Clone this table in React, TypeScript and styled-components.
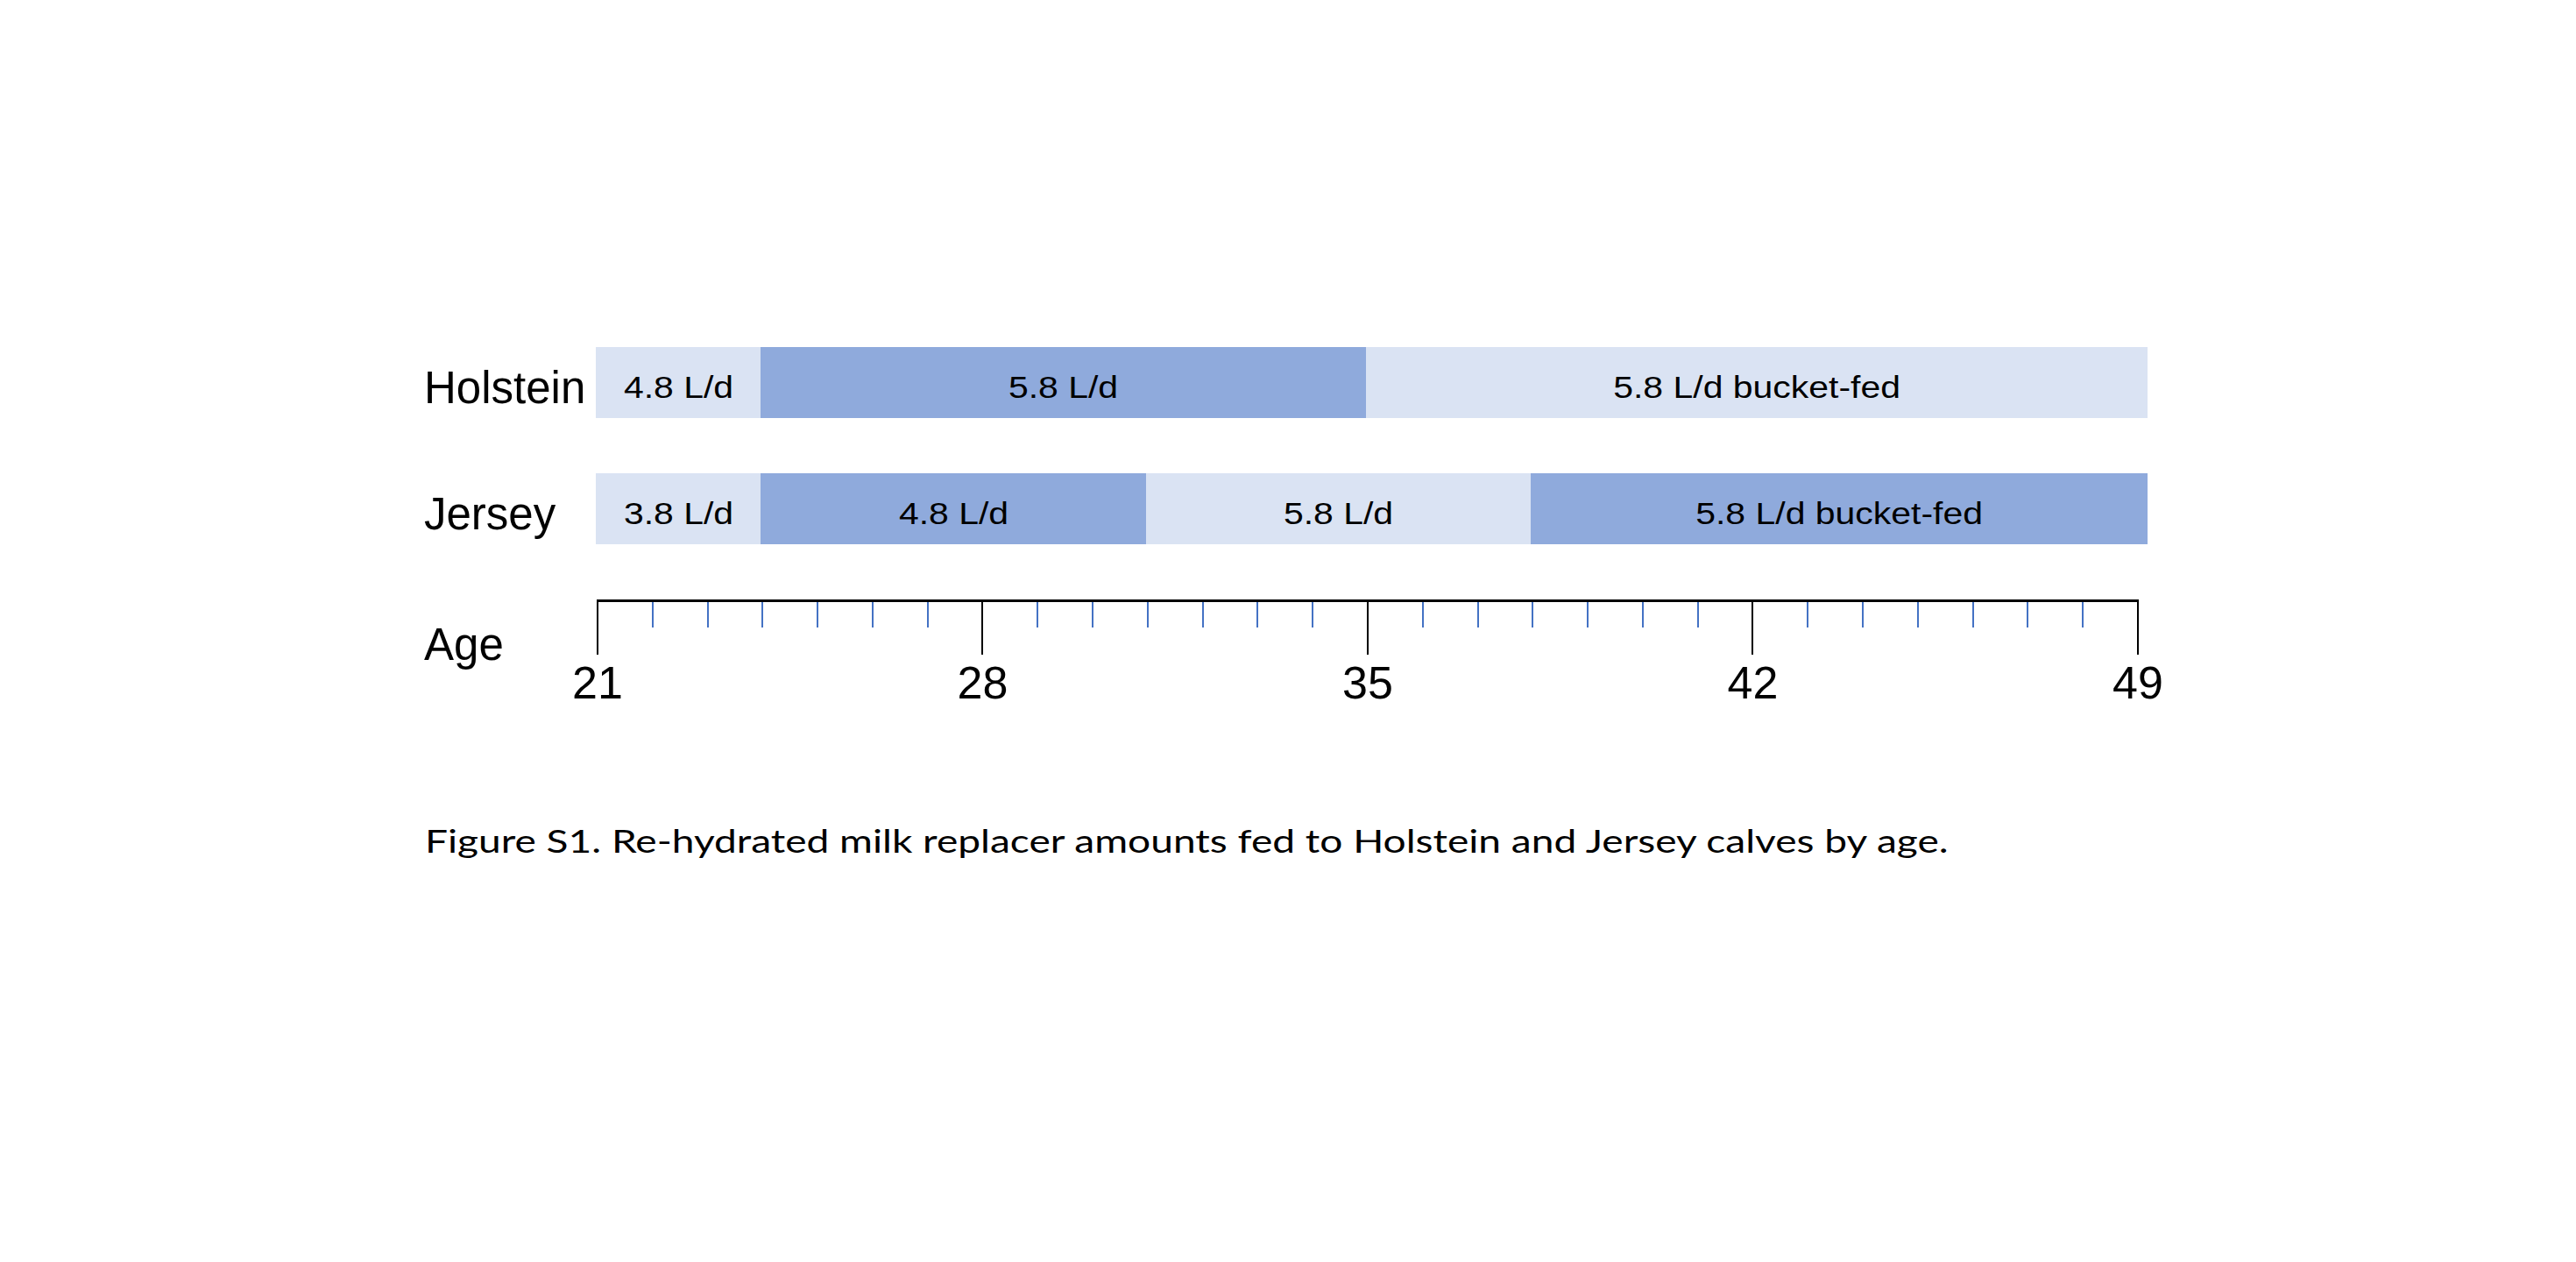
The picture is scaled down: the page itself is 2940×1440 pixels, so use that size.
import styled, { createGlobalStyle } from "styled-components";

const GlobalStyle = createGlobalStyle`
  html, body {
    margin: 0;
    padding: 0;
    background: #ffffff;
  }

  body {
    font-family: "Liberation Sans", Arial, sans-serif;
    color: #000000;
  }
`

// one day on the age axis (21 -> 49 spans 1758px)
const AXIS_WIDTH = 1760
const DAY = 1758 / 28

type Tone = "light" | "dark"

interface iSegment {
  label: string
  days?: number
  tone: Tone
}

interface iBreed {
  name: string
  segments: iSegment[]
}

const breeds: iBreed[] = [
  {
    name: "Holstein",
    segments: [
      { label: "4.8 L/d", days: 3, tone: "light" },
      { label: "5.8 L/d", days: 11, tone: "dark" },
      { label: "5.8 L/d bucket-fed", tone: "light" },
    ],
  },
  {
    name: "Jersey",
    segments: [
      { label: "3.8 L/d", days: 3, tone: "light" },
      { label: "4.8 L/d", days: 7, tone: "dark" },
      { label: "5.8 L/d", days: 7, tone: "light" },
      { label: "5.8 L/d bucket-fed", tone: "dark" },
    ],
  },
]

const days = Array.from({ length: 29 }, (_, i) => 21 + i)
const majorDays = days.filter((d) => (d - 21) % 7 === 0)

const Page = styled.main`
  box-sizing: border-box;
  width: 2940px;
  height: 1440px;
  padding: 396px 0 0 483px;
`

const Chart = styled.div`
  display: grid;
  grid-template-columns: 197px 1771px;
  row-gap: 63px;
`

const RowLabel = styled.div<{ $offset: number }>`
  font-size: 51px;
  line-height: 68px;
  padding-top: ${(p) => p.$offset}px;
  padding-left: 1px;
  white-space: nowrap;
`

const Track = styled.div`
  display: flex;
  height: 81px;
`

const Segment = styled.div<{ $tone: Tone }>`
  flex: 1 1 0;
  box-sizing: border-box;
  display: flex;
  justify-content: center;
  padding-top: 10px;
  font-size: 35px;
  line-height: 71px;
  white-space: nowrap;
  background-color: ${(p) => (p.$tone === "dark" ? "#8FAADC" : "#DAE3F3")};
`

const SegmentText = styled.span`
  display: inline-block;
  transform: scaleX(1.17);
`

const Axis = styled.div`
  margin-left: 1px;
  width: ${AXIS_WIDTH}px;
`

const TickRow = styled.div`
  display: flex;
  justify-content: space-between;
  align-items: flex-start;
  border-top: 3px solid #000000;
`

const Tick = styled.span<{ $major: boolean }>`
  width: 2px;
  height: ${(p) => (p.$major ? 60 : 29)}px;
  background-color: ${(p) => (p.$major ? "#000000" : "#4472C4")};
`

const TickLabels = styled.div`
  display: flex;
  justify-content: space-between;
  margin-top: 2px;
`

const TickLabel = styled.span`
  width: 2px;
  display: flex;
  justify-content: center;
  font-size: 52px;
  line-height: 60px;
  white-space: nowrap;
`

// caption in the source is a wide, stretched Calibri-like face
const Caption = styled.p`
  width: fit-content;
  margin: 128px 0 0 2px;
  font-family: Lato, "Open Sans", sans-serif;
  font-size: 37px;
  line-height: 44px;
  white-space: nowrap;
  transform: scaleX(1.245);
  transform-origin: left center;
`

const App: React.FC = () => {
  return (
    <>
      <GlobalStyle />
      <Page>
        <Chart>
          {breeds.map((breed) => (
            <>
              <RowLabel key={breed.name + "-label"} $offset={13}>
                {breed.name}
              </RowLabel>
              <Track key={breed.name + "-track"}>
                {breed.segments.map((s, i) => (
                  <Segment
                    key={i}
                    $tone={s.tone}
                    style={s.days ? { flex: `0 0 ${s.days * DAY}px` } : undefined}
                  >
                    <SegmentText>{s.label}</SegmentText>
                  </Segment>
                ))}
              </Track>
            </>
          ))}

          <RowLabel $offset={18}>Age</RowLabel>
          <Axis>
            <TickRow>
              {days.map((d) => (
                <Tick key={d} $major={(d - 21) % 7 === 0} />
              ))}
            </TickRow>
            <TickLabels>
              {majorDays.map((d) => (
                <TickLabel key={d}>{d}</TickLabel>
              ))}
            </TickLabels>
          </Axis>
        </Chart>

        <Caption>
          Figure S1. Re-hydrated milk replacer amounts fed to Holstein and Jersey calves by age.
        </Caption>
      </Page>
    </>
  );
}

export default App;
